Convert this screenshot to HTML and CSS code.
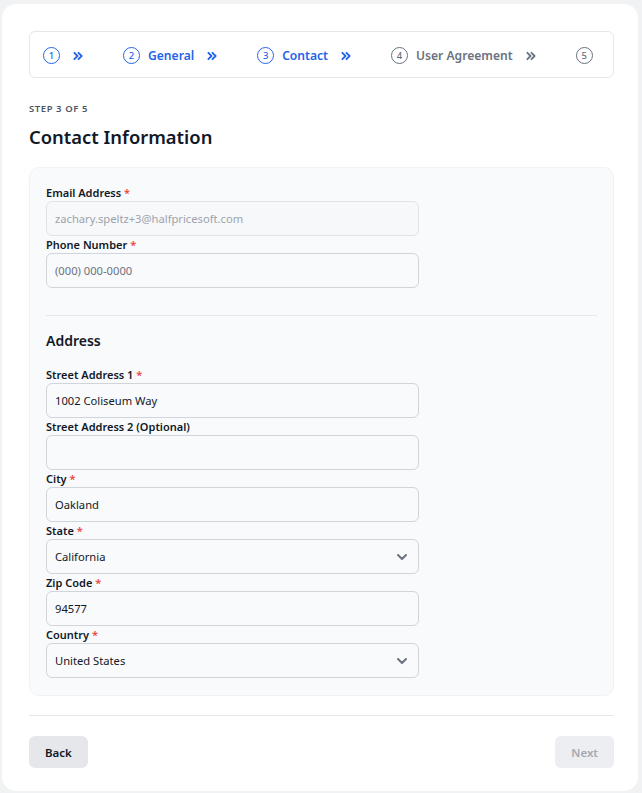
FILE: index.html
```html
<!DOCTYPE html>
<html lang="en">
<head>
<meta charset="utf-8">
<title>Contact Information</title>
<link rel="stylesheet" href="styles.css">
</head>
<body>
<div class="card">
  <nav class="stepper">
    <div class="step done">
      <span class="circle">1</span>
      <svg class="chev" viewBox="0 0 11 10"><path d="M1.5 1.5L5 5L1.5 8.5M6 1.5L9.5 5L6 8.5"/></svg>
    </div>
    <div class="step done">
      <span class="circle">2</span>
      <span class="label">General</span>
      <svg class="chev" viewBox="0 0 11 10"><path d="M1.5 1.5L5 5L1.5 8.5M6 1.5L9.5 5L6 8.5"/></svg>
    </div>
    <div class="step done">
      <span class="circle">3</span>
      <span class="label">Contact</span>
      <svg class="chev" viewBox="0 0 11 10"><path d="M1.5 1.5L5 5L1.5 8.5M6 1.5L9.5 5L6 8.5"/></svg>
    </div>
    <div class="step todo">
      <span class="circle">4</span>
      <span class="label">User Agreement</span>
      <svg class="chev" viewBox="0 0 11 10"><path d="M1.5 1.5L5 5L1.5 8.5M6 1.5L9.5 5L6 8.5"/></svg>
    </div>
    <div class="step todo">
      <span class="circle">5</span>
    </div>
  </nav>

  <p class="eyebrow">STEP 3 OF 5</p>
  <h1 class="title">Contact Information</h1>

  <section class="panel">
    <div class="field">
      <label class="flabel">Email Address <span class="req">*</span></label>
      <div class="input disabled">zachary.speltz+3@halfpricesoft.com</div>
    </div>
    <div class="field">
      <label class="flabel">Phone Number <span class="req">*</span></label>
      <div class="input placeholder">(000) 000-0000</div>
    </div>

    <hr class="divider">

    <h2 class="subtitle">Address</h2>

    <div class="field">
      <label class="flabel">Street Address 1 <span class="req">*</span></label>
      <div class="input">1002 Coliseum Way</div>
    </div>
    <div class="field">
      <label class="flabel">Street Address 2 (Optional)</label>
      <div class="input"></div>
    </div>
    <div class="field">
      <label class="flabel">City <span class="req">*</span></label>
      <div class="input">Oakland</div>
    </div>
    <div class="field">
      <label class="flabel">State <span class="req">*</span></label>
      <div class="input select">California
        <svg class="caret" viewBox="0 0 12 8"><path d="M2 2l4 4 4-4"/></svg>
      </div>
    </div>
    <div class="field">
      <label class="flabel">Zip Code <span class="req">*</span></label>
      <div class="input">94577</div>
    </div>
    <div class="field">
      <label class="flabel">Country <span class="req">*</span></label>
      <div class="input select">United States
        <svg class="caret" viewBox="0 0 12 8"><path d="M2 2l4 4 4-4"/></svg>
      </div>
    </div>
  </section>

  <hr class="footer-line">

  <div class="actions">
    <button class="btn">Back</button>
    <button class="btn btn-disabled">Next</button>
  </div>
</div>
</body>
</html>
```

FILE: styles.css
```css
* { box-sizing: border-box; }

html, body {
  margin: 0;
  background: #f1f2f4;
}

body {
  padding: 4px 4px 2px 2px;
  font-family: "Noto Sans", "Open Sans", sans-serif;
  color: #111827;
}

.card {
  background: #ffffff;
  border-radius: 14px;
  padding: 27px 24px 22px 27px;
  min-height: 787px;
}

.stepper {
  display: flex;
  align-items: center;
  gap: 40px;
  height: 47px;
  padding: 2px 13px 0;
  border: 1px solid #e5e7eb;
  border-radius: 6px;
}

.step {
  display: flex;
  align-items: center;
  font-size: 12.1px;
  font-weight: 600;
  white-space: nowrap;
}

.step.done { color: #2563eb; }
.step.todo { color: #6b7280; }

.circle {
  width: 17px;
  height: 17px;
  flex: none;
  border: 1.3px solid currentColor;
  border-radius: 50%;
  display: flex;
  align-items: center;
  justify-content: center;
  font-size: 9.5px;
  font-weight: 500;
  line-height: 1;
}

.label {
  margin-left: 8px;
}

.chev {
  width: 10px;
  height: 10px;
  flex: none;
  margin-left: 13px;
  fill: none;
  stroke: currentColor;
  stroke-width: 2;
  stroke-linecap: round;
  stroke-linejoin: round;
}

.eyebrow {
  margin: 25px 0 0;
  font-size: 9.5px;
  font-weight: 600;
  letter-spacing: 0.06em;
  color: #4b5563;
  line-height: 12px;
}

.title {
  margin: 9px 0 0;
  font-size: 18.4px;
  font-weight: 600;
  line-height: 26px;
  color: #111827;
}

.panel {
  margin-top: 17px;
  background: #f9fafb;
  border: 1px solid #f1f2f4;
  border-radius: 10px;
  padding: 16px 16px 17px 16px;
}

.field {
  display: flex;
  flex-direction: column;
}

.flabel {
  font-size: 11px;
  font-weight: 600;
  line-height: 17px;
  color: #111827;
}

.req { color: #ef4444; }

.input {
  width: 373px;
  height: 35px;
  border: 1px solid #d1d5db;
  border-radius: 6px;
  background: #f9fafb;
  padding: 0 8px;
  display: flex;
  align-items: center;
  font-size: 11.2px;
  color: #111827;
}

.input.disabled {
  color: #9ca3af;
  background: #f7f8f9;
  border-color: #e1e3e7;
}

.input.placeholder { color: #6b7280; }

.select { justify-content: space-between; }

.caret {
  width: 12px;
  height: 8px;
  margin-right: 2px;
  fill: none;
  stroke: #6b7280;
  stroke-width: 2;
  stroke-linecap: round;
  stroke-linejoin: round;
}

.divider {
  border: 0;
  border-top: 1px solid #e5e7eb;
  margin: 27px 0 14px;
}

.subtitle {
  margin: 0 0 14px;
  font-size: 14px;
  font-weight: 600;
  line-height: 22px;
  color: #111827;
}

.footer-line {
  border: 0;
  border-top: 1px solid #e5e7eb;
  margin: 19px 0 20px;
}

.actions {
  display: flex;
  justify-content: space-between;
}

.btn {
  height: 32px;
  padding: 0 16px;
  border: 0;
  border-radius: 6px;
  background: #e5e7eb;
  font-family: inherit;
  font-size: 11.5px;
  font-weight: 600;
  color: #111827;
}

.btn-disabled {
  background: #eceef1;
  color: #a4a9b2;
}
```
